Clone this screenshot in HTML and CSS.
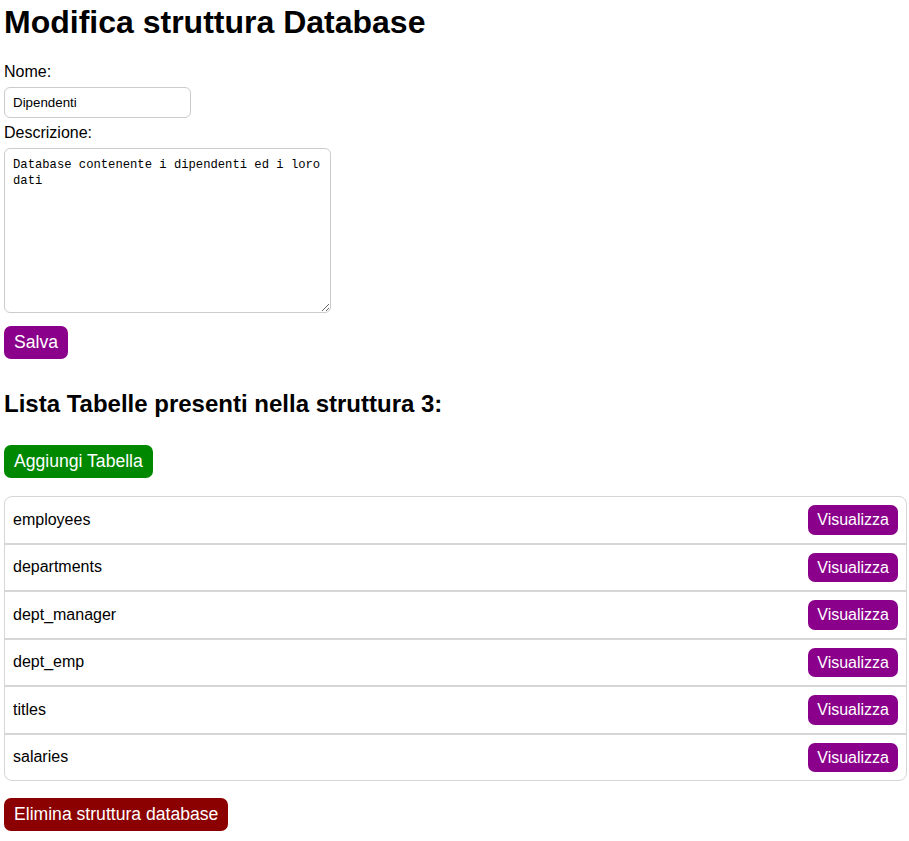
FILE: index.html
```html
<!DOCTYPE html>
<html lang="it">
<head>
<meta charset="utf-8">
<title>Modifica struttura Database</title>
<link rel="stylesheet" href="styles.css">
</head>
<body>
<h1 class="title">Modifica struttura Database</h1>
<form class="edit-form">
  <label class="field-label" for="nome">Nome:</label>
  <input class="text-input" id="nome" type="text" value="Dipendenti">
  <label class="field-label" for="descr">Descrizione:</label>
  <textarea class="text-area" id="descr">Database contenente i dipendenti ed i loro dati</textarea>
  <div><button class="btn btn-purple" type="button">Salva</button></div>
</form>
<h2 class="subtitle">Lista Tabelle presenti nella struttura 3:</h2>
<button class="btn btn-green" type="button">Aggiungi Tabella</button>
<ul class="table-list">
  <li class="table-row"><span>employees</span><button class="btn-small" type="button">Visualizza</button></li>
  <li class="table-row"><span>departments</span><button class="btn-small" type="button">Visualizza</button></li>
  <li class="table-row"><span>dept_manager</span><button class="btn-small" type="button">Visualizza</button></li>
  <li class="table-row"><span>dept_emp</span><button class="btn-small" type="button">Visualizza</button></li>
  <li class="table-row"><span>titles</span><button class="btn-small" type="button">Visualizza</button></li>
  <li class="table-row"><span>salaries</span><button class="btn-small" type="button">Visualizza</button></li>
</ul>
<button class="btn btn-red" type="button">Elimina struttura database</button>
</body>
</html>
```
FILE: styles.css
```css
html, body {
  background: #fff;
}
body {
  margin: 0;
  padding: 4px 2px 4px 4px;
  font-family: "Liberation Sans", Arial, sans-serif;
  font-size: 16px;
  color: #000;
}
.title {
  font-size: 32px;
  font-weight: bold;
  margin: 0 0 22px 0;
  line-height: 37px;
}
.edit-form {
  margin: 0;
}
.field-label {
  display: block;
  line-height: 18px;
  margin-bottom: 6px;
}
.text-input {
  display: block;
  box-sizing: border-box;
  width: 187px;
  height: 31px;
  padding: 0 8px;
  border: 1px solid #ccc;
  border-radius: 6px;
  font-family: "Liberation Sans", Arial, sans-serif;
  font-size: 13.33px;
  color: #000;
  margin: 0 0 6px 0;
}
.text-area {
  display: block;
  box-sizing: border-box;
  width: 327px;
  height: 165px;
  padding: 8px;
  border: 1px solid #ccc;
  border-radius: 6px;
  font-family: "Liberation Mono", "DejaVu Sans Mono", monospace;
  font-size: 12.2px;
  line-height: 16px;
  color: #000;
  margin: 0 0 13px 0;
  resize: vertical;
}
.btn {
  display: inline-block;
  border: 0;
  border-radius: 7px;
  padding: 6px 10px;
  font-family: "Liberation Sans", Arial, sans-serif;
  font-size: 17.6px;
  line-height: 21px;
  color: #fff;
  cursor: pointer;
}
.btn-purple { background: #8b008b; }
.btn-green { background: #008800; }
.btn-red { background: #8b0000; }
.subtitle {
  font-size: 24px;
  font-weight: bold;
  line-height: 28px;
  margin: 31px 0 27px 0;
}
.table-list {
  list-style: none;
  margin: 18px 0 17px 0;
  padding: 0;
  border: 1px solid #d6d6d6;
  border-radius: 8px;
}
.table-row {
  display: flex;
  align-items: center;
  justify-content: space-between;
  padding: 8px 8px 8px 8px;
  border-bottom: 2px solid #d6d6d6;
}
.table-row:last-child {
  border-bottom: 0;
}
.btn-small {
  border: 0;
  border-radius: 7px;
  background: #8b008b;
  color: #fff;
  font-family: "Liberation Sans", Arial, sans-serif;
  font-size: 16px;
  line-height: 19px;
  padding: 5px 9px 5.5px 9px;
  cursor: pointer;
}
```
